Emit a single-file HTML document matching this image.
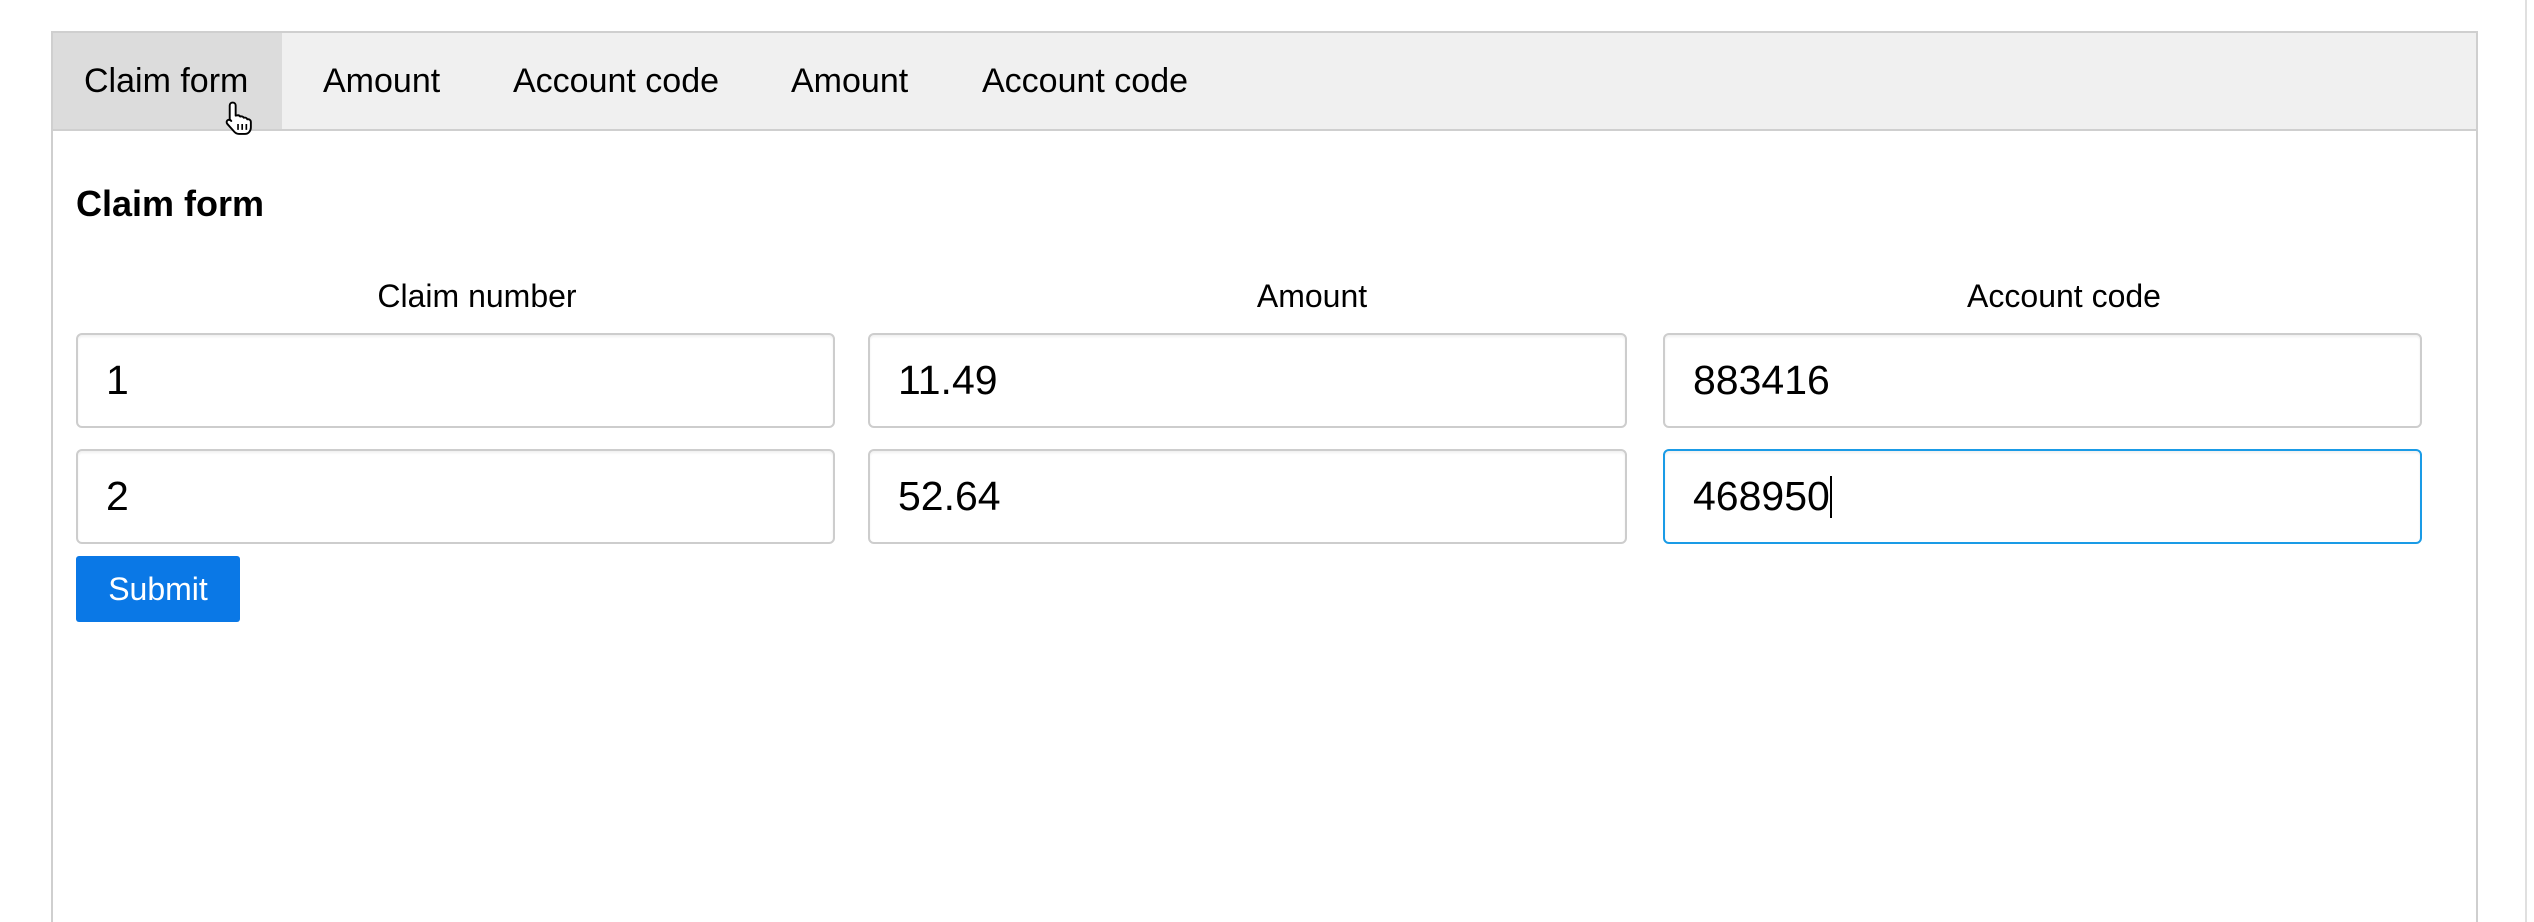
<!DOCTYPE html>
<html style="width:2534px;height:922px;overflow:hidden"><head><meta charset="utf-8"><style>
*{box-sizing:border-box;margin:0;padding:0}
body{width:2534px;height:922px;background:#fff;font-family:"Liberation Sans",Arial,sans-serif;position:relative;overflow:hidden;color:#000}
.panel{position:absolute;left:51px;top:31px;width:2427px;height:891px;border:2px solid #cfcfcf;border-bottom:none}
.tabs{position:absolute;left:0;top:0;right:0;height:98px;background:#f0f0f0;border-bottom:2px solid #cfcfcf}
.tab{position:absolute;top:0;height:96px;line-height:96px;font-size:34px;white-space:nowrap}
.act{background:#dcdcdc;left:0;width:229px}
h1{position:absolute;left:76px;top:180px;font-size:36px;font-weight:bold;line-height:48px}
.lbl{position:absolute;top:276px;font-size:32px;line-height:40px;width:600px;text-align:center}
.in{position:absolute;width:759px;height:95px;border:2px solid #cdcdcd;border-radius:6px;font-size:41px;line-height:91px;padding-left:28px;box-shadow:inset 0 2px 2px rgba(0,0,0,.06)}
.foc{border-color:#1a9be6}
.btn{position:absolute;left:76px;top:556px;width:164px;height:66px;background:#0a78e6;border-radius:3px;color:#fff;font-size:32px;line-height:66px;text-align:center}
.vline{position:absolute;left:2525px;top:0;width:2px;height:922px;background:#e0e0e0}
</style></head><body>
<div class="panel">
<div class="tabs">
<div class="tab act"></div>
<div class="tab" style="left:31px">Claim form</div>
<div class="tab" style="left:270px">Amount</div>
<div class="tab" style="left:460px">Account code</div>
<div class="tab" style="left:738px">Amount</div>
<div class="tab" style="left:929px">Account code</div>
</div>
</div>
<svg style="position:absolute;left:222px;top:99px" width="38" height="38" viewBox="0 0 32 32">
<path d="M9 3c1.5 0 2.5 1 2.5 2.5V14l1-.2c1.4-.3 2.4.2 2.8 1 1.3-.5 2.5 0 3 1 1.3-.4 2.6.2 3 1.3 1.5-.3 3 .6 3 2.3v4.5c0 3-2 5.5-5 5.5h-5c-2 0-3.2-.8-4.4-2.3L4.5 21c-1-1.3-.6-2.8.5-3.3 1-.5 2-.1 2.8.8L6.5 17V5.5C6.5 4 7.5 3 9 3z" fill="#fff" stroke="#000" stroke-width="1.6" stroke-linejoin="round"/>
<path d="M13.5 21v5M17 21v5M20.5 21v5" stroke="#000" stroke-width="1.4"/>
</svg>
<h1>Claim form</h1>
<div class="lbl" style="left:177px">Claim number</div>
<div class="lbl" style="left:1012px">Amount</div>
<div class="lbl" style="left:1764px">Account code</div>
<div class="in" style="left:76px;top:333px">1</div>
<div class="in" style="left:868px;top:333px">11.49</div>
<div class="in" style="left:1663px;top:333px">883416</div>
<div class="in" style="left:76px;top:449px">2</div>
<div class="in" style="left:868px;top:449px">52.64</div>
<div class="in foc" style="left:1663px;top:449px">468950<span style="display:inline-block;width:2px;height:42px;background:#000;vertical-align:middle;margin-top:-4px"></span></div>
<div class="btn">Submit</div>
<div class="vline"></div>
</body></html>
